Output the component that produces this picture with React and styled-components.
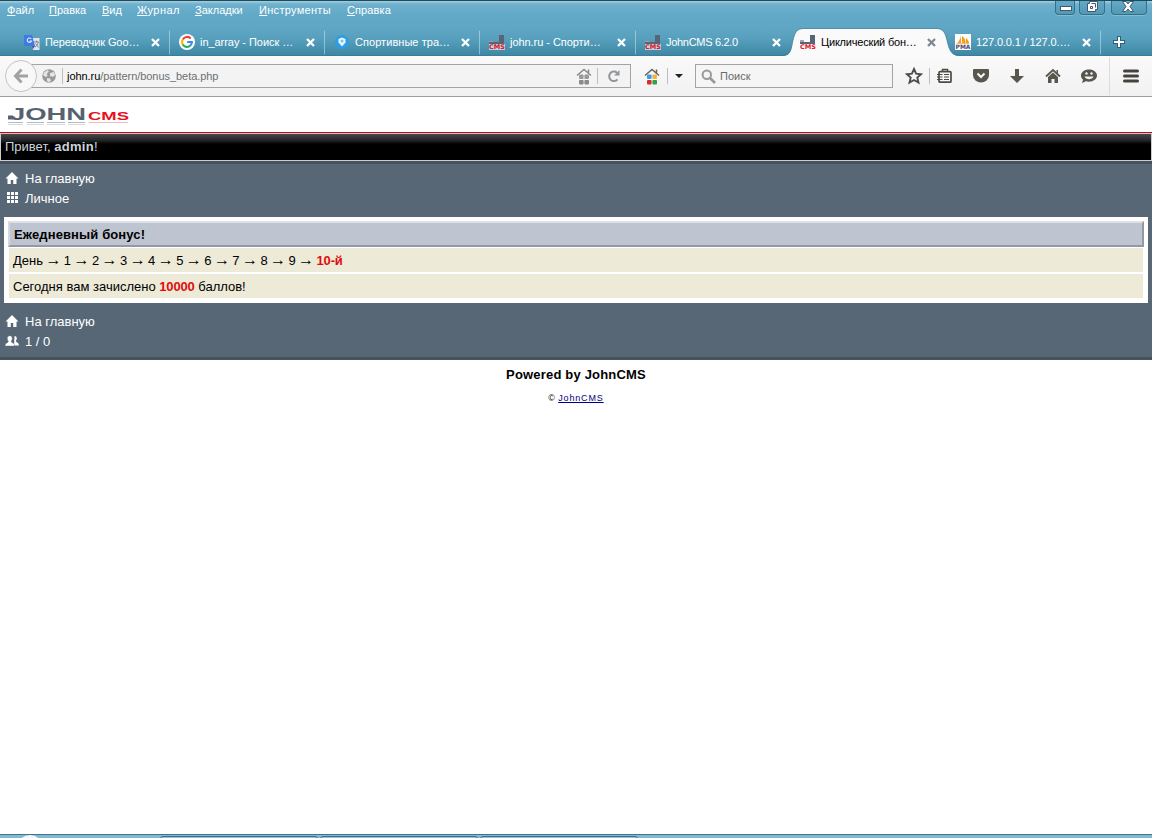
import React from 'react';
import styled, { createGlobalStyle } from 'styled-components';

const GlobalStyle = createGlobalStyle`
  *, *::before, *::after {
    box-sizing: border-box;
  }

  body {
    margin: 0;
    overflow: hidden;
    font-family: 'Liberation Sans', Arial, sans-serif;
  }

  svg {
    display: block;
    flex-shrink: 0;
  }
`;

const Screen = styled.div`
  width: 1152px;
  height: 838px;
  display: flex;
  flex-direction: column;
  background: #fff;
  overflow: hidden;
`;

const TitleBar = styled.div`
  height: 56px;
  flex-shrink: 0;
  display: flex;
  flex-direction: column;
  justify-content: space-between;
  border-top: 1px solid #1d4a5d;
  background: linear-gradient(#a5d0e2 0, #70b1cd 3px, #63aac9 12px, #5fa6c4 28px, #569fbd 38px, #3e88a5 54px, #2f7590 55px);
`;

const TopRow = styled.div`
  height: 20px;
  display: flex;
  justify-content: space-between;
`;

const Menu = styled.div`
  display: flex;
  padding: 3px 0 0 7px;
  font-size: 11px;
  line-height: 13px;
  color: #fff;
`;

const MenuItem = styled.span`
  width: ${({ $width }) => $width}px;
  letter-spacing: ${({ $spacing }) => $spacing || 0}px;
  white-space: nowrap;

  &::first-letter {
    text-decoration: underline;
  }
`;

const WindowButtons = styled.div`
  display: flex;
  padding-right: 5px;
`;

const WindowButton = styled.div`
  width: ${({ $width }) => $width}px;
  height: 14px;
  margin-left: ${({ $gap }) => $gap || 0}px;
  display: flex;
  justify-content: center;
  border: 1px solid #347089;
  border-top: 0;
  border-radius: 0 0 4px 4px;
  box-shadow: 0 1px 0 #83bdd3;
  background: linear-gradient(#64a9c6, #5399b6);
`;

const Tabs = styled.div`
  height: 28px;
  display: flex;
  padding-left: 15px;
`;

const Tab = styled.div`
  position: relative;
  width: ${({ $width }) => $width || 155}px;
  height: 28px;
  display: flex;
  align-items: center;
  padding: 0 9px;
  border-right: 1px solid ${({ $line }) => ($line ? '#8dbfd3' : 'transparent')};
  border-image: ${({ $line }) => ($line ? 'linear-gradient(transparent 3px, #9bcadb 4px, #8abdd0 25px, transparent 26px) 1' : 'none')};
`;

const TabShape = styled.svg`
  position: absolute;
  left: -9px;
  top: 0;
`;

const TabIcon = styled.div`
  position: relative;
  width: 16px;
  height: 16px;
`;

const TabTitle = styled.span`
  position: relative;
  flex: 1;
  margin-left: 5px;
  font-size: 11px;
  line-height: 14px;
  letter-spacing: ${({ $spacing }) => $spacing || 0}px;
  white-space: nowrap;
  color: ${({ $active }) => ($active ? '#000' : '#fff')};
`;

const TabClose = styled.svg`
  position: relative;
`;

const NewTab = styled.div`
  height: 28px;
  display: flex;
  align-items: center;
  padding-left: 12px;
`;

const Toolbar = styled.div`
  height: 41px;
  flex-shrink: 0;
  display: flex;
  align-items: center;
  padding-left: 5px;
  border-bottom: 1px solid #9a9ea0;
  background: linear-gradient(#fafafa, #f1f1f1);
`;

const BackButton = styled.div`
  position: relative;
  z-index: 1;
  width: 32px;
  height: 32px;
  display: flex;
  align-items: center;
  justify-content: center;
  border: 1px solid #c4c4c4;
  border-radius: 50%;
  background: #f8f8f8;
`;

const UrlBar = styled.div`
  width: 600px;
  height: 24px;
  margin-left: -6px;
  display: flex;
  align-items: center;
  padding: 0 9px 0 10px;
  border: 1px solid #a3a3a3;
  background: #f3f3f3;
`;

const Url = styled.span`
  flex: 1;
  margin-left: 4px;
  font-size: 11px;
  line-height: 14px;
  letter-spacing: -0.05px;
  color: #6f6f6f;

  b {
    font-weight: normal;
    color: #000;
  }
`;

const SearchBox = styled.div`
  width: 198px;
  height: 24px;
  margin-left: 12px;
  display: flex;
  align-items: center;
  padding-left: 5px;
  border: 1px solid #a3a3a3;
  background: #f5f5f5;
  font-size: 11px;
  color: #6a6a6a;

  span {
    margin-left: 4px;
  }
`;

const Divider = styled.div`
  width: 1px;
  height: ${({ $height }) => $height || 16}px;
  margin-left: ${({ $gap }) => $gap || 0}px;
  background: ${({ $light }) => ($light ? '#dcdcdc' : '#bdbdbd')};
`;

const Tool = styled.div`
  width: ${({ $width }) => $width || 18}px;
  margin-left: ${({ $gap }) => $gap ?? 18}px;
  display: flex;
  justify-content: center;
`;

const Page = styled.div`
  flex: 1;
  display: flex;
  flex-direction: column;
  font-size: 13px;
`;

const LogoBar = styled.div`
  height: 35px;
  padding: 8px 0 0 7px;
`;

const Greeting = styled.div`
  height: 29px;
  padding: 5px 0 0 4px;
  border: 1px solid #c9ced2;
  border-top: 2px solid #b91420;
  border-image: linear-gradient(#b3101c 0, #b3101c 1px, #eab0b4 1px, #c9ced2 3px) 2 1 1 1;
  background: linear-gradient(#48484a, #25282a 6px, #0c0c0c 9px, #000 10px);
  line-height: 15px;
  color: #ccd3da;

  b {
    letter-spacing: 0.3px;
  }
`;

const NavPanel = styled.div`
  height: ${({ $height }) => $height}px;
  padding: ${({ $top }) => $top}px 0 0 5px;
  border-top: ${({ $edge }) => ($edge === 'top' ? '3px solid #47525d' : 0)};
  border-bottom: ${({ $edge }) => ($edge === 'bottom' ? '3px solid #47525d' : 0)};
  background: #586776;
`;

const NavLink = styled.div`
  height: 20px;
  display: flex;
  align-items: center;
  color: #fff;

  svg {
    width: 14px;
    margin-right: 6px;
  }
`;

const ContentWrap = styled.div`
  padding: 0 4px;
  background: #586776;
`;

const Content = styled.div`
  height: 86px;
  padding: 4px;
  background: #fff;
`;

const Caption = styled.div`
  height: 26px;
  padding: 4px 0 0 4px;
  border: 2px solid #9298a6;
  border-top-color: #dfe1e8;
  border-left-color: #d5d8e0;
  background: #bfc5d0;
  font-weight: bold;
  line-height: 15px;
  letter-spacing: 0.12px;
`;

const Row = styled.div`
  height: 24px;
  margin: ${({ $gap }) => $gap}px 1px 0;
  padding: 4px 0 0 3px;
  border: 1px solid #ece8da;
  background: #edead8;
  line-height: 15px;
  white-space: nowrap;

  b {
    color: #e00d0d;
    letter-spacing: -0.15px;
  }
`;

const Arrow = styled.span`
  display: inline-flex;
  justify-content: center;
  width: 13.6px;
  height: 12px;
  font-size: 16px;
  line-height: 12px;
`;

const Footer = styled.div`
  padding-top: 7px;
  text-align: center;
`;

const Powered = styled.div`
  font-weight: bold;
  line-height: 15px;
  letter-spacing: 0.18px;
`;

const Copyright = styled.div`
  margin-top: 10px;
  font-size: 9px;
  line-height: 12px;
  word-spacing: -1px;
  letter-spacing: 0.85px;

  a {
    color: #000080;
    text-decoration: underline;
  }
`;

const Taskbar = styled.div`
  height: 4px;
  flex-shrink: 0;
  display: flex;
  gap: 2px;
  padding: 1px 0 0 160px;
  border-top: 1px solid #4a7286;
  background: #7dbad3;
  overflow: hidden;
`;

const StartOrb = styled.div`
  width: 26px;
  height: 26px;
  flex-shrink: 0;
  margin: -1px 115px 0 -143px;
  border-radius: 50%;
  background: #f4f9fb;
`;

const TaskButton = styled.div`
  width: 158px;
  height: 20px;
  border: 1px solid #3f7186;
  border-radius: 3px;
  background: #8fc5da;
`;

const CloseGlyph = ({ color = '#fff' }) => (
  <TabClose width="9" height="9" viewBox="0 0 9 9">
    <path d="M1 1l7 7M8 1L1 8" stroke={color} strokeWidth="2.3" />
  </TabClose>
);

const JohnIcon = ({ active }) => (
  <svg width="16" height="16" viewBox="0 0 16 16">
    <path d="M10 1h5v9H0V6.500h4V8h6z" fill="#596474" />
    <path d="M0 6.500h4V8H0z" fill="#9aa2ac" />
    <rect y="10" width="16" height="6" fill="#fff" opacity={active ? 0.9 : 0.6} />
    <text x="0" y="15" textLength="16" lengthAdjust="spacingAndGlyphs" fontFamily="DejaVu Sans" fontWeight="bold" fontSize="6.4" fill="#e3101e">CMS</text>
  </svg>
);

const TranslateIcon = () => (
  <svg width="16" height="16" viewBox="0 0 16 16">
    <path d="M7 4h8.500v12H9z" fill="#e2e4e8" />
    <path d="M10 8h5M12.500 6.500V8M11 13c2-1 3-3 3-5M11.500 9.500l3 4" stroke="#7b8794" fill="none" />
    <path d="M0 1h8l3 11H1L0 11z" fill="#4078e6" />
    <path d="M7.300 5A2.200 2.200 0 1 0 7.500 7H5.600" stroke="#dfe9ff" strokeWidth="1.100" fill="none" />
    <path d="M8 12h3l-2 3z" fill="#3157a8" />
  </svg>
);

const GoogleIcon = () => (
  <svg width="16" height="16" viewBox="0 0 16 16">
    <circle cx="8" cy="8" r="8" fill="#fff" />
    <g fill="none" strokeWidth="2.100">
      <path d="M11.700 4.500A4.900 4.900 0 0 0 3.800 5.500" stroke="#ea4335" />
      <path d="M3.800 5.400a4.900 4.900 0 0 0 0 5.200" stroke="#fbbc05" />
      <path d="M3.800 10.500a4.900 4.900 0 0 0 7.600 1.100" stroke="#34a853" />
      <path d="M11.300 11.700A4.800 4.800 0 0 0 12.900 8H8.200" stroke="#4285f4" />
    </g>
  </svg>
);

const SportIcon = () => (
  <svg width="16" height="16" viewBox="0 0 16 16">
    <circle cx="8" cy="8" r="7" fill="#2f9de0" />
    <path d="M4.500 5L8 3.500 11.500 5v3.500L8 12.500 4.500 8.500z" fill="#e9f8ff" />
    <circle cx="8" cy="7" r="1.500" fill="#70c4ef" />
  </svg>
);

const PmaIcon = () => (
  <svg width="16" height="16" viewBox="0 0 16 16">
    <rect width="16" height="16" fill="#fff" />
    <path d="M6 1v8H2.500C4 7 5.500 5 6 1zM7 2c3 2 3.500 4 3.500 7H7zM11 4c2.500 2 3 4 3 5h-3z" fill="#f59b23" />
    <path d="M1 9h14l-2 1.200H3z" fill="#f8bd6c" />
    <text x="0.500" y="15" textLength="15" lengthAdjust="spacingAndGlyphs" fontFamily="DejaVu Sans" fontWeight="bold" fontSize="6" fill="#4a4673">PMA</text>
  </svg>
);

const HouseDots = ({ roof, colors }) => (
  <svg width="16" height="17" viewBox="0 0 16 17">
    <path d="M1 7.500L8 1.500l7 6M12.500 1.500v4" stroke={roof} strokeWidth="1.500" fill="none" />
    <rect x="3" y="6.500" width="4.600" height="4.600" rx="1" fill={colors[0]} />
    <rect x="8.400" y="6.500" width="4.600" height="4.600" rx="1" fill={colors[1]} />
    <rect x="3" y="11.900" width="4.600" height="4.600" rx="1" fill={colors[2]} />
    <rect x="8.400" y="11.900" width="4.600" height="4.600" rx="1" fill={colors[3]} />
  </svg>
);

const HomeIcon = () => (
  <svg width="14" height="14" viewBox="0 0 14 14">
    <path d="M7 1L0.500 7.500h2V13h3.300V9h2.400v4h3.300V7.500h2z" fill="#fff" />
  </svg>
);

const GridIcon = () => (
  <svg width="14" height="12" viewBox="0 0 14 12">
    {[0, 4, 8].map((y) => [2, 6, 10].map((x) => (
      <rect key={`${x}-${y}`} x={x} y={y} width="3" height="3" fill="#fff" />
    )))}
  </svg>
);

const UsersIcon = () => (
  <svg width="14" height="12" viewBox="0 0 14 12">
    <path d="M9.500 1C12.300 1 12.300 4.500 10.800 6c0 1.500 3 1.200 3.200 4.500H9z" fill="#fff" />
    <path d="M4.800.8c3 0 3 3.700 1.400 5.400C6.200 8 9.600 7.500 9.800 11H0c.2-3.500 3.400-3 3.400-4.800C1.800 4.500 1.800.8 4.800.8z" fill="#fff" stroke="#586776" strokeWidth=".4" />
  </svg>
);

const JohnLogo = () => (
  <svg width="124" height="24" viewBox="0 0 124 24">
    <g fontFamily="Liberation Sans" fontWeight="bold">
      <text x="3" y="14.500" textLength="76" lengthAdjust="spacingAndGlyphs" fontSize="17" fill="#56626f">JOHN</text>
      <text x="81" y="14.500" textLength="41" lengthAdjust="spacingAndGlyphs" fontSize="11.500" fill="#e8101c">CMS</text>
    </g>
    <path d="M1 10.500h5v4H1z" fill="#56626f" />
    <path d="M1 17.500h15M20 17.500h17M40 17.500h18M61 17.500h17" stroke="#b4bac1" />
    <path d="M1 19.500h15M20 19.500h17M40 19.500h18M61 19.500h17" stroke="#d7dadd" />
    <path d="M82 17.500h39" stroke="#f1b9bc" />
  </svg>
);

const tabs = [
  { title: 'Переводчик Goo…', icon: <TranslateIcon />, line: true, width: 155, spacing: -0.1 },
  { title: 'in_array - Поиск …', icon: <GoogleIcon />, line: true, width: 155, spacing: -0.05 },
  { title: 'Спортивные тра…', icon: <SportIcon />, line: true, width: 155, spacing: 0.05 },
  { title: 'john.ru - Спорти…', icon: <JohnIcon />, line: true, width: 156, spacing: -0.05 },
  { title: 'JohnCMS 6.2.0', icon: <JohnIcon />, width: 155, spacing: -0.3 },
  { title: 'Циклический бон…', icon: <JohnIcon active />, active: true, width: 155, spacing: -0.2 },
  { title: '127.0.0.1 / 127.0.…', icon: <PmaIcon />, line: true, width: 155, spacing: -0.12 },
];

const menu = [
  { label: 'Файл', width: 42 },
  { label: 'Правка', width: 53 },
  { label: 'Вид', width: 35 },
  { label: 'Журнал', width: 58, spacing: 0.45 },
  { label: 'Закладки', width: 64 },
  { label: 'Инструменты', width: 88, spacing: 0.3 },
  { label: 'Справка', width: 50, spacing: 0.1 },
];

const days = [1, 2, 3, 4, 5, 6, 7, 8, 9];

const Browser = () => (
  <>
    <TitleBar>
      <TopRow>
        <Menu>
          {menu.map(({ label, width, spacing }) => (
            <MenuItem key={label} $width={width} $spacing={spacing}>{label}</MenuItem>
          ))}
        </Menu>
        <WindowButtons>
          <WindowButton $width={20}>
            <svg width="14" height="12" viewBox="0 0 14 12">
              <rect x="2.500" y="5.500" width="11" height="4" fill="#fff" stroke="#44596a" />
            </svg>
          </WindowButton>
          <WindowButton $width={26} $gap={4}>
            <svg width="12" height="12" viewBox="0 0 12 12">
              <path d="M3.500.5h8v8h-2v2h-8v-8h2z" fill="#fff" stroke="#44596a" />
              <path d="M4.500 5.500h2v2h-2zM5.500 2.500h4v4" fill="none" stroke="#44596a" />
            </svg>
          </WindowButton>
          <WindowButton $width={36} $gap={6}>
            <svg width="14" height="12" viewBox="0 0 14 12">
              <path d="M.5.500h3.500L6 3 8 .5h3.500L8 5.500l3.500 5H8L6 8l-2 2.500H.5l3.500-5z" fill="#fff" stroke="#44596a" />
            </svg>
          </WindowButton>
        </WindowButtons>
      </TopRow>
      <Tabs>
        {tabs.map(({ title, icon, active, line, width, spacing }) => (
          <Tab key={title} $width={width} $line={line}>
            {active && (
              <TabShape width="178" height="28" viewBox="0 0 178 28">
                <path d="M0 28C10 28 9 20 11 12 13 4 15 .5 22 .5H154C161 .5 163 4 165 12 167 20 168 28 178 28z" fill="#fafafa" />
                <path d="M0 27.500C10 27.500 9 20 11 12 13 4 15 .5 22 .5H154C161 .5 163 4 165 12 167 20 168 27.500 178 27.500" fill="none" stroke="#3a7d98" strokeWidth=".8" />
              </TabShape>
            )}
            <TabIcon>{icon}</TabIcon>
            <TabTitle $active={active} $spacing={spacing}>{title}</TabTitle>
            <CloseGlyph color={active ? '#7d8894' : '#fff'} />
          </Tab>
        ))}
        <NewTab>
          <svg width="12" height="12" viewBox="0 0 12 12">
            <path d="M6 0v12M0 6h12" stroke="#2c6379" strokeWidth="4" />
            <path d="M6 1v10M1 6h10" stroke="#fff" strokeWidth="2" />
          </svg>
        </NewTab>
      </Tabs>
    </TitleBar>

    <Toolbar>
      <BackButton>
        <svg width="16" height="16" viewBox="0 0 16 16">
          <path d="M8.500 1.500L2.500 8l6 6.500M3 8h12" stroke="#a2a2a0" strokeWidth="3" fill="none" />
        </svg>
      </BackButton>
      <UrlBar>
        <svg width="14" height="14" viewBox="0 0 14 14">
          <circle cx="7" cy="7" r="6.800" fill="#999" />
          <path d="M2 3.500L5.500 1 7 2.500 5 4.500 5.500 7 3.500 8 1 6zM8 4l4-1 1 3-2 2-2-1-1 1zM5 9l3 .5 1 2L7 13.500 5 12z" fill="#e4e4e4" />
        </svg>
        <Divider $gap={6} />
        <Url><b>john.ru</b>/pattern/bonus_beta.php</Url>
        <HouseDots roof="#8a8a8a" colors={['#999', '#999', '#8a8a8a', '#8a8a8a']} />
        <Divider $gap={5} />
        <Tool $gap={9} $width={14}>
          <svg width="14" height="14" viewBox="0 0 14 14">
            <path d="M10.500 10.300A4.700 4.700 0 1 1 10 3.800" stroke="#8e979d" strokeWidth="2" fill="none" />
            <path d="M12.500 1v5.500H7z" fill="#8e979d" />
          </svg>
        </Tool>
      </UrlBar>
      <Tool $gap={13} $width={16}>
        <HouseDots roof="#6b6360" colors={['#30a2df', '#f3b23a', '#d92b2b', '#2aa34a']} />
      </Tool>
      <Divider $gap={7} />
      <Tool $gap={6} $width={9}>
        <svg width="8" height="4" viewBox="0 0 8 4">
          <path d="M0 0h8L4 4z" fill="#222" />
        </svg>
      </Tool>
      <SearchBox>
        <svg width="15" height="15" viewBox="0 0 15 15">
          <circle cx="5.800" cy="5.800" r="4.200" stroke="#999" strokeWidth="2" fill="none" />
          <path d="M9 9l5 5" stroke="#999" strokeWidth="2.600" />
        </svg>
        <span>Поиск</span>
      </SearchBox>
      <Tool $gap={12}>
        <svg width="18" height="18" viewBox="0 0 18 18">
          <path d="M9 2l2.100 4.700 5 .5-3.800 3.400 1.200 5L9 13l-4.500 2.600 1.200-5L1.900 7.200l5-.5z" stroke="#4d4d4a" strokeWidth="1.900" fill="none" />
        </svg>
      </Tool>
      <Divider $gap={6} />
      <Tool $gap={6}>
        <svg width="16" height="16" viewBox="0 0 16 16">
          <path d="M5.500 3V1.500h5V3" fill="none" stroke="#4d4a42" strokeWidth="1.500" />
          <rect x="2" y="3.700" width="12" height="10.500" rx="1" fill="#f7f7f7" stroke="#4d4a42" strokeWidth="1.700" />
          <path d="M0 6.500h5.500M7 6.500h5M0 9h5.500M7 9h5M0 11.500h5.500M7 11.500h5" stroke="#4d4a42" strokeWidth="1.200" />
        </svg>
      </Tool>
      <Tool>
        <svg width="16" height="14" viewBox="0 0 16 14">
          <path d="M1 0h14q1 0 1 1v5a8 7.500 0 0 1-16 0V1q0-1 1-1z" fill="#58564d" />
          <path d="M4.500 4.500L8 8l3.500-3.500" stroke="#fafafa" strokeWidth="2" fill="none" />
        </svg>
      </Tool>
      <Tool>
        <svg width="14" height="14" viewBox="0 0 14 14">
          <path d="M5 0h4v7h5l-7 7-7-7h5z" fill="#58564d" />
        </svg>
      </Tool>
      <Tool>
        <svg width="16" height="16" viewBox="0 0 16 16">
          <path d="M1 8.500L8 2l7 6.500" stroke="#58564d" strokeWidth="1.800" fill="none" />
          <path d="M11.500 2H13v4l-1.500-1.500zM3 9l5-4.500L13 9v6H9.500v-4h-3v4H3z" fill="#58564d" />
        </svg>
      </Tool>
      <Tool>
        <svg width="16" height="16" viewBox="0 0 16 16">
          <path d="M8 1.500c4.600 0 8 2.700 8 6s-3.400 6.200-8 6.200c-1 0-2-.1-3-.4L1 15l1-3.300C.7 10.600 0 9.100 0 7.500c0-3.300 3.400-6 8-6z" fill="#58564d" />
          <circle cx="5.500" cy="5.500" r="1.200" fill="#f5f5f5" />
          <circle cx="10.500" cy="5.500" r="1.200" fill="#f5f5f5" />
          <path d="M3.500 8.500h9c-1.300 3.500-7.700 3.500-9 0z" fill="#f5f5f5" />
        </svg>
      </Tool>
      <Divider $gap={11} $height={38} $light />
      <Tool $gap={12}>
        <svg width="16" height="14" viewBox="0 0 16 14">
          <path d="M1.500 2h13M1.500 7h13M1.500 12h13" stroke="#45433c" strokeWidth="3" strokeLinecap="round" />
        </svg>
      </Tool>
    </Toolbar>
  </>
);

const App = () => (
  <Screen>
    <GlobalStyle />
    <Browser />
    <Page>
      <LogoBar>
        <JohnLogo />
      </LogoBar>
      <Greeting>
        Привет, <b>admin</b>!
      </Greeting>
      <NavPanel $height={56} $top={4} $edge="top">
        <NavLink><HomeIcon />На главную</NavLink>
        <NavLink><GridIcon />Личное</NavLink>
      </NavPanel>
      <ContentWrap>
        <Content>
          <Caption>Ежедневный бонус!</Caption>
          <Row $gap={1}>
            День <Arrow>→</Arrow>{' '}
            {days.map((day) => (
              <React.Fragment key={day}>
                {day} <Arrow>→</Arrow>{' '}
              </React.Fragment>
            ))}
            <b>10-й</b>
          </Row>
          <Row $gap={2}>
            Сегодня вам зачислено <b>10000</b> баллов!
          </Row>
        </Content>
      </ContentWrap>
      <NavPanel $height={57} $top={8} $edge="bottom">
        <NavLink><HomeIcon />На главную</NavLink>
        <NavLink><UsersIcon />1 / 0</NavLink>
      </NavPanel>
      <Footer>
        <Powered>Powered by JohnCMS</Powered>
        <Copyright>
          © <a>JohnCMS</a>
        </Copyright>
      </Footer>
    </Page>
    <Taskbar>
      <StartOrb />
      <TaskButton />
      <TaskButton />
      <TaskButton />
    </Taskbar>
  </Screen>
);

export default App;
